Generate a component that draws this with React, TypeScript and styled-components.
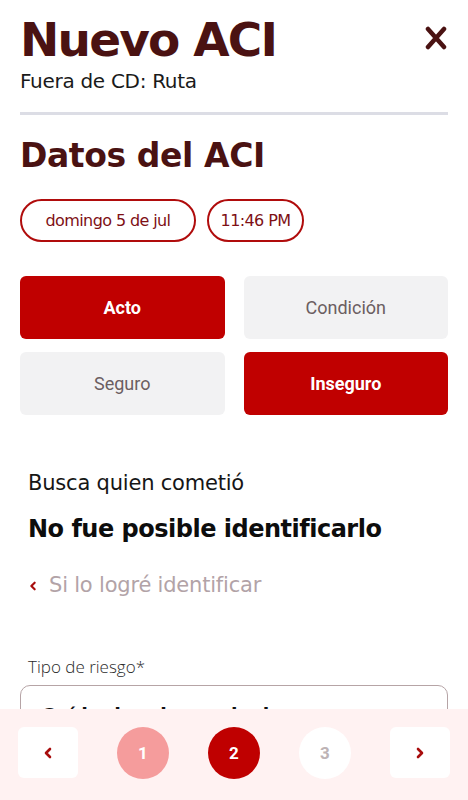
import React from 'react';
import styled, { createGlobalStyle } from 'styled-components';

const GlobalStyle = createGlobalStyle`
  html, body {
    margin: 0;
    padding: 0;
    background: #ffffff;
  }
  * {
    box-sizing: border-box;
  }
`;

const TITLE_FONT = `'DejaVu Sans', 'Noto Sans', sans-serif`;
const BODY_FONT = `'DejaVu Sans', 'Noto Sans', sans-serif`;

const Screen = styled.div`
  width: 468px;
  height: 800px;
  display: flex;
  flex-direction: column;
  overflow: hidden;
  font-family: ${BODY_FONT};
`;

const Content = styled.main`
  flex: 1;
  overflow: hidden;
  padding: 0 20px;
`;

const Header = styled.header`
  display: flex;
  justify-content: space-between;
  align-items: flex-start;
  padding-top: 13px;
`;

const Title = styled.h1`
  margin: 0;
  font-family: ${TITLE_FONT};
  font-weight: 700;
  font-size: 47px;
  line-height: 54px;
  letter-spacing: -1.8px;
  color: #4a1212;
`;

const CloseButton = styled.button`
  border: none;
  background: none;
  padding: 0;
  margin-top: 13px;
  margin-right: 1px;
  width: 22px;
  height: 24px;
  cursor: pointer;
`;

const Subtitle = styled.p`
  margin: 2px 0 0;
  font-family: ${BODY_FONT};
  font-size: 20px;
  line-height: 25px;
  letter-spacing: -0.3px;
  color: #1a1a1a;
`;

const Divider = styled.hr`
  margin: 18px 0 0;
  border: none;
  height: 3px;
  background: #dcdde5;
`;

const SectionTitle = styled.h2`
  margin: 21px 0 0;
  font-family: ${TITLE_FONT};
  font-weight: 700;
  font-size: 33px;
  line-height: 40px;
  letter-spacing: -0.4px;
  color: #4a1212;
`;

const PillRow = styled.div`
  display: flex;
  gap: 11px;
  margin-top: 23px;
`;

const Pill = styled.button<{ $w: number }>`
  width: ${(p) => p.$w}px;
  height: 43px;
  border: 2px solid #b00c0c;
  border-radius: 22px;
  background: #ffffff;
  color: #7e1015;
  font-family: ${BODY_FONT};
  font-size: 16px;
  letter-spacing: -0.6px;
  padding: 0;
`;

const ChoiceGrid = styled.div`
  display: grid;
  grid-template-columns: 1fr 1fr;
  column-gap: 19px;
  row-gap: 13px;
  margin-top: 34px;
`;

const Choice = styled.button<{ $active?: boolean }>`
  height: 63px;
  border: none;
  border-radius: 6px;
  background: ${(p) => (p.$active ? '#c00000' : '#f2f2f3')};
  color: ${(p) => (p.$active ? '#ffffff' : '#6b5e61')};
  font-family: Roboto, sans-serif;
  font-weight: ${(p) => (p.$active ? 700 : 400)};
  font-size: 18px;
`;

const Section = styled.section`
  padding: 0 8px;
  margin-top: 55px;
`;

const Label = styled.p`
  margin: 0;
  font-family: ${BODY_FONT};
  font-size: 21px;
  line-height: 27px;
  letter-spacing: -0.2px;
  color: #161616;
`;

const Answer = styled.p`
  margin: 16px 0 0;
  font-family: ${TITLE_FONT};
  font-weight: 700;
  font-size: 24px;
  line-height: 32px;
  letter-spacing: -0.5px;
  color: #0d0d0d;
`;

const LinkRow = styled.a`
  display: flex;
  align-items: center;
  gap: 11px;
  margin-top: 26px;
  color: #b2a3a7;
  font-family: ${BODY_FONT};
  font-size: 21px;
  line-height: 29px;
  letter-spacing: -0.2px;
  text-decoration: none;
`;

const FieldLabel = styled.label`
  display: block;
  margin: 56px 0 0 8px;
  font-family: 'Open Sans', sans-serif;
  font-weight: 300;
  font-size: 17px;
  line-height: 22px;
  color: #2a2a2a;
`;

const Field = styled.div`
  margin-top: 7px;
  height: 60px;
  border: 1px solid #b6a4a6;
  border-radius: 10px;
  padding: 17px 20px;
  font-family: ${TITLE_FONT};
  font-weight: 700;
  font-size: 19px;
  line-height: 24px;
  color: #111;
`;

const Footer = styled.footer`
  flex: 0 0 91px;
  background: #fff2f2;
  display: flex;
  align-items: center;
  justify-content: space-between;
  padding: 0 18px 4px;
`;

const NavButton = styled.button`
  width: 60px;
  height: 51px;
  border: none;
  border-radius: 6px;
  background: #ffffff;
  display: flex;
  align-items: center;
  justify-content: center;
  padding: 0;
`;

const Step = styled.div<{ $state: 'done' | 'current' | 'todo' }>`
  width: 52px;
  height: 52px;
  border-radius: 50%;
  display: flex;
  align-items: center;
  justify-content: center;
  font-family: Roboto, sans-serif;
  font-weight: 700;
  font-size: 17px;
  background: ${(p) =>
    p.$state === 'done' ? '#f59c9c' : p.$state === 'current' ? '#bf0000' : '#ffffff'};
  color: ${(p) => (p.$state === 'todo' ? '#bdb3b5' : '#ffffff')};
`;

const Chevron = ({ dir, size = 12 }: { dir: 'left' | 'right'; size?: number }) => (
  <svg width={size} height={size} viewBox="0 0 12 12" fill="none">
    <path
      d={dir === 'left' ? 'M8 2 L4 6 L8 10' : 'M4 2 L8 6 L4 10'}
      stroke="#a80d0d"
      strokeWidth="2.6"
      strokeLinecap="round"
      strokeLinejoin="round"
    />
  </svg>
);

const App = () => {
  return (
    <>
      <GlobalStyle />
      <Screen>
        <Content>
          <Header>
            <Title>Nuevo ACI</Title>
            <CloseButton aria-label="Cerrar">
              <svg width="22" height="24" viewBox="0 0 22 24">
                <path
                  d="M3 3 L19 21 M19 3 L3 21"
                  stroke="#4a1212"
                  strokeWidth="4.5"
                  strokeLinecap="round"
                />
              </svg>
            </CloseButton>
          </Header>
          <Subtitle>Fuera de CD: Ruta</Subtitle>
          <Divider />
          <SectionTitle>Datos del ACI</SectionTitle>
          <PillRow>
            <Pill $w={176}>domingo 5 de jul</Pill>
            <Pill $w={97}>11:46 PM</Pill>
          </PillRow>
          <ChoiceGrid>
            <Choice $active>Acto</Choice>
            <Choice>Condición</Choice>
            <Choice>Seguro</Choice>
            <Choice $active>Inseguro</Choice>
          </ChoiceGrid>
          <Section>
            <Label>Busca quien cometió</Label>
            <Answer>No fue posible identificarlo</Answer>
            <LinkRow href="#">
              <Chevron dir="left" size={10} />
              Si lo logré identificar
            </LinkRow>
          </Section>
          <FieldLabel>Tipo de riesgo*</FieldLabel>
          <Field>Caída de mismo nivel</Field>
        </Content>
        <Footer>
          <NavButton aria-label="Anterior">
            <Chevron dir="left" />
          </NavButton>
          <Step $state="done">1</Step>
          <Step $state="current">2</Step>
          <Step $state="todo">3</Step>
          <NavButton aria-label="Siguiente">
            <Chevron dir="right" />
          </NavButton>
        </Footer>
      </Screen>
    </>
  );
};

export default App;
